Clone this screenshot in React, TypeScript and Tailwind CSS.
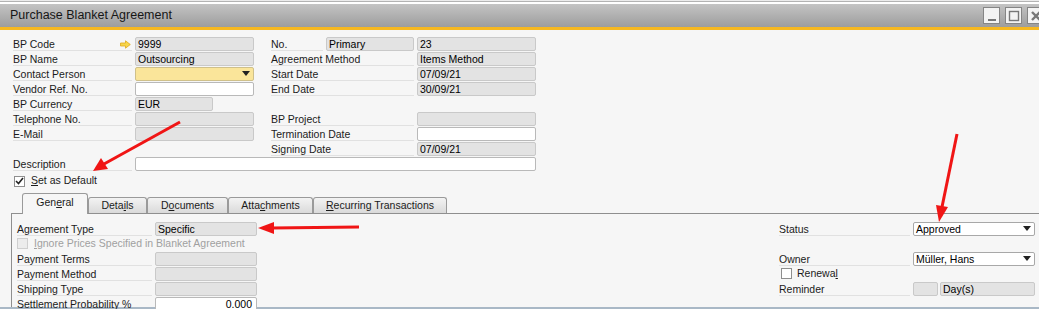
import React from 'react';

type FieldKind = 'gray' | 'white' | 'yellow' | 'select';

const Field = ({ w, value = '', kind = 'gray', right = false }: { w: string; value?: string; kind?: FieldKind; right?: boolean }) => {
  const base = 'relative h-[14px] rounded-[2px] border px-[2px] leading-[12px] text-black whitespace-nowrap overflow-hidden';
  const tone =
    kind === 'gray'
      ? 'bg-[#e3e3e3] border-[#c9c9c9]'
      : kind === 'yellow'
      ? 'bg-[#fae59a] border-[#cfc08a]'
      : kind === 'select'
      ? 'bg-white border-[#a8a8a8]'
      : 'bg-white border-[#b9b9b9]';
  return (
    <div className={`${base} ${tone} ${w} ${right ? 'text-right pr-[4px]' : ''}`}>
      {value}
      {kind === 'yellow' || kind === 'select' ? (
        <svg className="absolute right-[3px] top-[3px]" width="8" height="6" viewBox="0 0 8 6">
          <path d="M0 0 H8 L4 5 Z" fill="#222" />
        </svg>
      ) : null}
    </div>
  );
};

const Label = ({ w, children, muted = false }: { w: string; children: React.ReactNode; muted?: boolean }) => (
  <div className={`h-[14px] mr-[3px] border-b border-[#e1e1e1] leading-[14px] whitespace-nowrap ${muted ? 'text-[#a0a0a0]' : 'text-[#1b1b1b]'} ${w}`}>
    {children}
  </div>
);

const Row = ({ children }: { children?: React.ReactNode }) => <div className="flex h-[15px] items-start">{children}</div>;

const Check = ({ checked = false, disabled = false }: { checked?: boolean; disabled?: boolean }) => (
  <div
    className={`flex h-[11px] w-[11px] items-center justify-center border ${
      disabled ? 'border-[#cfcfcf] bg-[#ececec]' : 'border-[#8e8e8e] bg-white'
    }`}
  >
    {checked ? (
      <svg width="9" height="8" viewBox="0 0 9 8">
        <path d="M1 4 L3.5 6.5 L8 1" stroke="#222" strokeWidth="1.6" fill="none" />
      </svg>
    ) : null}
  </div>
);

const WinButton = ({ kind }: { kind: 'min' | 'max' | 'close' }) => (
  <div className="flex h-[17px] w-[17px] items-center justify-center border border-[#858585] bg-[#f3f3f3]">
    <svg width="12" height="12" viewBox="0 0 12 12">
      {kind === 'min' ? <rect x="2" y="9" width="8" height="2" fill="#777" /> : null}
      {kind === 'max' ? <rect x="1.5" y="1.5" width="9" height="9" fill="none" stroke="#777" strokeWidth="1.4" /> : null}
      {kind === 'close' ? <path d="M2 2 L10 10 M10 2 L2 10" stroke="#777" strokeWidth="2.4" /> : null}
    </svg>
  </div>
);

const tabs = [
  { label: <>Gen<u>e</u>ral</>, w: 'w-[66px]', active: true },
  { label: <>Deta<u>i</u>ls</>, w: 'w-[59px]' },
  { label: <>D<u>o</u>cuments</>, w: 'w-[81px]' },
  { label: <>Atta<u>c</u>hments</>, w: 'w-[85px]' },
  { label: <><u>R</u>ecurring Transactions</>, w: 'w-[134px]' },
];

const App = () => {
  return (
    <div className="relative h-[309px] w-[1039px] overflow-hidden bg-[#f6f6f6] font-['Liberation_Sans',Arial,sans-serif] text-[10.5px]">
      {/* window chrome */}
      <div className="h-[1px] bg-[#ececec]" />
      <div className="h-[1px] bg-[#b3b3b3]" />
      <div className="h-[2px] bg-white" />
      <div className="flex h-[23px] items-center overflow-hidden bg-linear-to-b from-[#c4c4c4] to-[#9d9d9d] pl-[10px]">
        <span className="text-[12.5px] text-[#161616]">Purchase Blanket Agreement</span>
        <div className="ml-auto mr-[-5px] flex gap-[5px]">
          <WinButton kind="min" />
          <WinButton kind="max" />
          <WinButton kind="close" />
        </div>
      </div>
      <div className="h-[3px] bg-[#f6b820]" />

      {/* header */}
      <div className="pl-[13px] pt-[7px]">
        <div className="flex">
          <div className="flex w-[258px] flex-col">
            <Row>
              <Label w="w-[119px] relative">
                BP Code
                <svg className="absolute right-[1px] top-[3px]" width="11" height="9" viewBox="0 0 11 9">
                  <path d="M0.5 3 H5.5 V0.8 L10.3 4.5 L5.5 8.2 V6 H0.5 Z" fill="#f7d64a" stroke="#e0a81e" strokeWidth="0.8" />
                </svg>
              </Label>
              <Field w="w-[119px]" value="9999" />
            </Row>
            <Row>
              <Label w="w-[119px]">BP Name</Label>
              <Field w="w-[119px]" value="Outsourcing" />
            </Row>
            <Row>
              <Label w="w-[119px]">Contact Person</Label>
              <Field w="w-[119px]" kind="yellow" />
            </Row>
            <Row>
              <Label w="w-[119px]">Vendor Ref. No.</Label>
              <Field w="w-[119px]" kind="white" />
            </Row>
            <Row>
              <Label w="w-[119px]">BP Currency</Label>
              <Field w="w-[78px]" value="EUR" />
            </Row>
            <Row>
              <Label w="w-[119px]">Telephone No.</Label>
              <Field w="w-[119px]" />
            </Row>
            <Row>
              <Label w="w-[119px]">E-Mail</Label>
              <Field w="w-[119px]" />
            </Row>
            <Row />
          </div>
          <div className="flex flex-col">
            <Row>
              <Label w="w-[52px]">No.</Label>
              <Field w="w-[88px]" value="Primary" />
              <div className="w-[3px]" />
              <Field w="w-[119px]" value="23" />
            </Row>
            <Row>
              <Label w="w-[143px]">Agreement Method</Label>
              <Field w="w-[119px]" value="Items Method" />
            </Row>
            <Row>
              <Label w="w-[143px]">Start Date</Label>
              <Field w="w-[119px]" value="07/09/21" />
            </Row>
            <Row>
              <Label w="w-[143px]">End Date</Label>
              <Field w="w-[119px]" value="30/09/21" />
            </Row>
            <Row />
            <Row>
              <Label w="w-[143px]">BP Project</Label>
              <Field w="w-[119px]" />
            </Row>
            <Row>
              <Label w="w-[143px]">Termination Date</Label>
              <Field w="w-[119px]" kind="white" />
            </Row>
            <Row>
              <Label w="w-[143px]">Signing Date</Label>
              <Field w="w-[119px]" value="07/09/21" />
            </Row>
          </div>
        </div>
        <Row>
          <Label w="w-[119px]">Description</Label>
          <Field w="w-[401px]" kind="white" />
        </Row>
        <div className="flex h-[15px] items-center gap-[6px] pl-[1px] pt-[3px] text-[#1b1b1b]">
          <Check checked />
          <span>
            <u>S</u>et as Default
          </span>
        </div>
      </div>

      {/* tabs */}
      <div className="relative z-10 mt-[6px] flex h-[20px] items-end pl-[22px]">
        {tabs.map((t, i) => (
          <div
            key={i}
            className={`flex items-center justify-center rounded-t-[3px] border border-b-0 border-[#9a9a9a] text-[#1b1b1b] ${t.w} ${
              t.active ? '-mb-px h-[21px] bg-[#f6f6f6] pb-[2px]' : 'h-[16px] bg-linear-to-b from-[#f3f3f3] to-[#dadada]'
            }`}
          >
            <span>{t.label}</span>
          </div>
        ))}
      </div>
      <div className="ml-[11px] h-[94px] border-l border-t border-[#8f8f8f] pl-[5px] pt-[8px]">
        <div className="flex">
          <div className="flex w-[240px] flex-col">
            <Row>
              <Label w="w-[135px]">Agreement Type</Label>
              <Field w="w-[102px]" value="Specific" />
            </Row>
            <div className="flex h-[15px] items-start gap-[6px] pt-[1px] text-[#a0a0a0]">
              <Check disabled />
              <span className="leading-[11px]">
                <u>I</u>gnore Prices Specified in Blanket Agreement
              </span>
            </div>
            <Row>
              <Label w="w-[135px]">Payment Terms</Label>
              <Field w="w-[102px]" />
            </Row>
            <Row>
              <Label w="w-[135px]">Payment Method</Label>
              <Field w="w-[102px]" />
            </Row>
            <Row>
              <Label w="w-[135px]">Shipping Type</Label>
              <Field w="w-[102px]" />
            </Row>
            <Row>
              <Label w="w-[135px]">Settlement Probability %</Label>
              <Field w="w-[102px]" kind="white" value="0.000" right />
            </Row>
          </div>
          <div className="ml-[522px] flex w-[256px] flex-col">
            <Row>
              <Label w="w-[131px]">Status</Label>
              <Field w="w-[122px]" kind="select" value="Approved" />
            </Row>
            <Row />
            <Row>
              <Label w="w-[131px]">Owner</Label>
              <Field w="w-[122px]" kind="select" value="Müller, Hans" />
            </Row>
            <div className="flex h-[15px] items-start gap-[5px] pl-[2px] pt-[1px] text-[#1b1b1b]">
              <Check />
              <span className="leading-[11px]">
                Renewa<u>l</u>
              </span>
            </div>
            <Row>
              <Label w="w-[131px]">Reminder</Label>
              <Field w="w-[25px]" />
              <div className="w-[2px]" />
              <Field w="w-[95px]" value="Day(s)" />
            </Row>
          </div>
        </div>
      </div>
      <div className="h-[2px] bg-[#a9b8c6]" />

      {/* annotation arrows */}
      <svg className="pointer-events-none absolute left-0 top-0" width="1039" height="309" viewBox="0 0 1039 309">
        <line x1="180" y1="122" x2="104" y2="164" stroke="#f01515" strokeWidth="3" />
        <polygon points="93,171 108,169 101,158" fill="#f01515" />
        <line x1="359" y1="227" x2="272" y2="228" stroke="#f01515" strokeWidth="3" />
        <polygon points="258,228 274,222 274,234" fill="#f01515" />
        <line x1="957" y1="134" x2="942" y2="207" stroke="#f01515" strokeWidth="3" />
        <polygon points="939,222 948,207 936,205" fill="#f01515" />
      </svg>
    </div>
  );
};

export default App;
